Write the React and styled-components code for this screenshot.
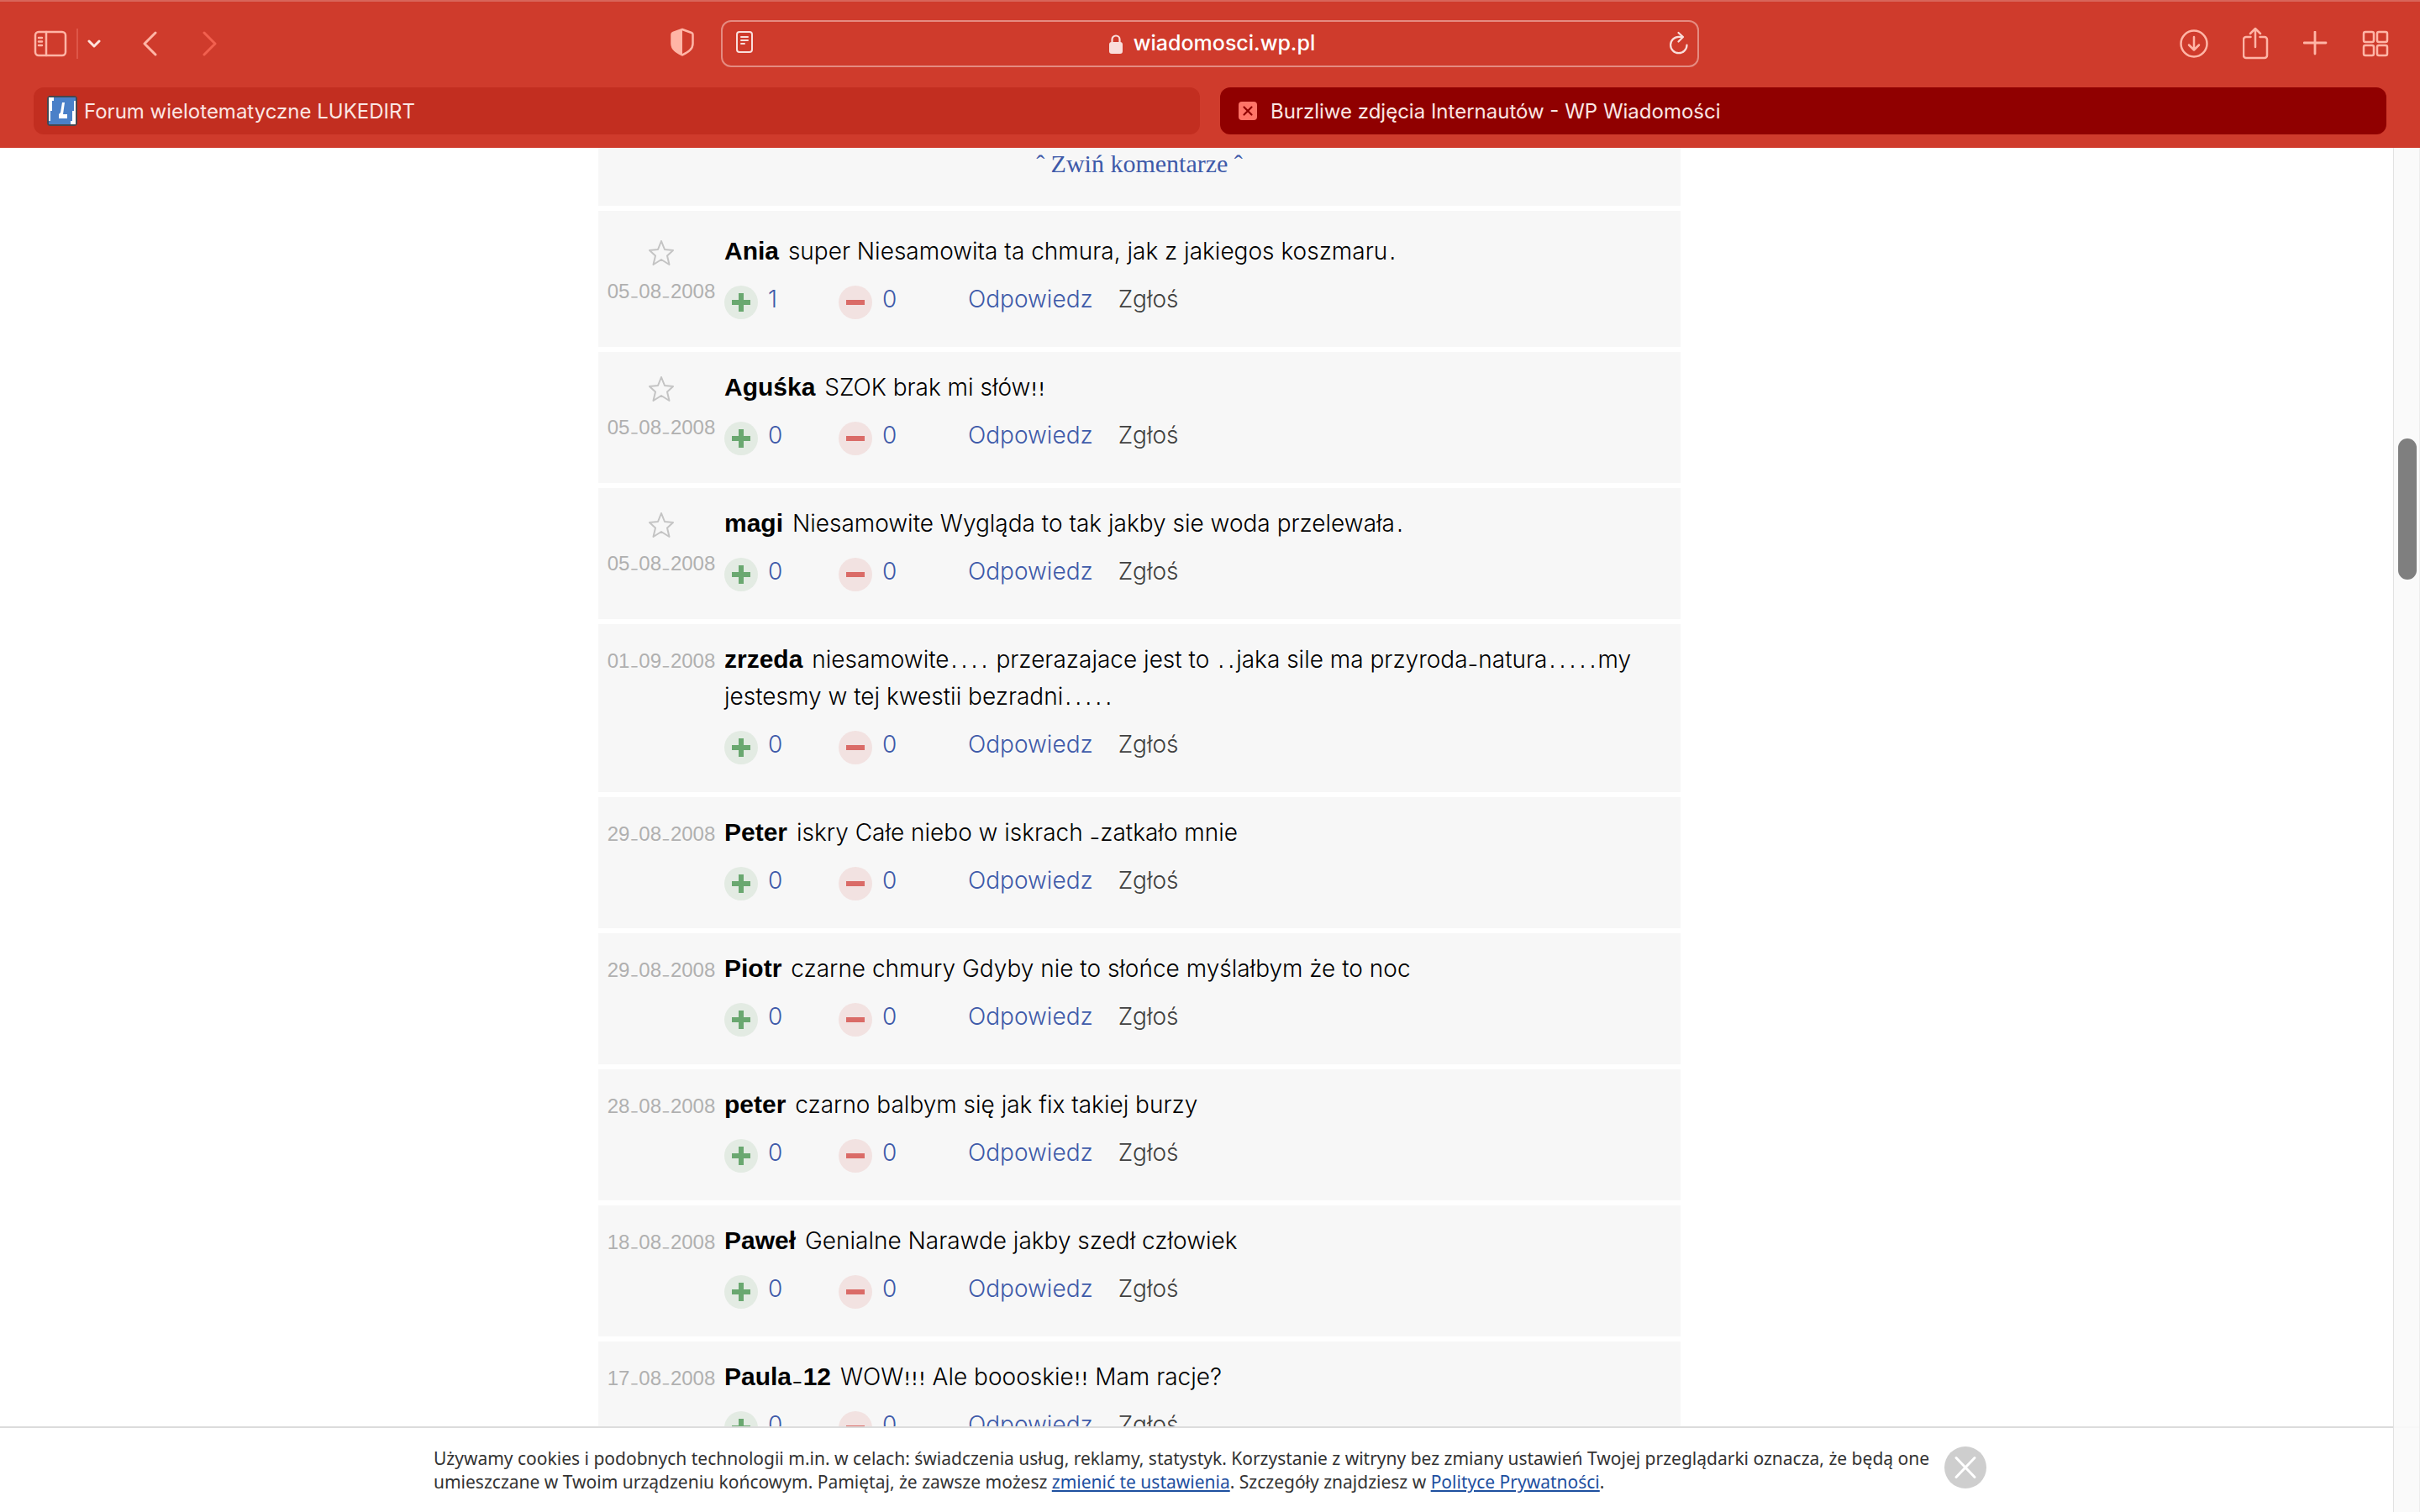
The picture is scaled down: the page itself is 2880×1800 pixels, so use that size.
import React, { useState } from 'react';
import styled, { createGlobalStyle } from 'styled-components';

const comments = [
  { date: '05-08-2008', starred: true, author: 'Ania', text: 'super Niesamowita ta chmura, jak z jakiegos koszmaru.', plus: 1, minus: 0 },
  { date: '05-08-2008', starred: true, author: 'Aguśka', text: 'SZOK brak mi słów!!', plus: 0, minus: 0 },
  { date: '05-08-2008', starred: true, author: 'magi', text: 'Niesamowite Wygląda to tak jakby sie woda przelewała.', plus: 0, minus: 0 },
  { date: '01-09-2008', author: 'zrzeda', text: 'niesamowite.... przerazajace jest to ..jaka sile ma przyroda-natura.....my jestesmy w tej kwestii bezradni.....', plus: 0, minus: 0 },
  { date: '29-08-2008', author: 'Peter', text: 'iskry Całe niebo w iskrach -zatkało mnie', plus: 0, minus: 0 },
  { date: '29-08-2008', author: 'Piotr', text: 'czarne chmury Gdyby nie to słońce myślałbym że to noc', plus: 0, minus: 0 },
  { date: '28-08-2008', author: 'peter', text: 'czarno balbym się jak fix takiej burzy', plus: 0, minus: 0 },
  { date: '18-08-2008', author: 'Paweł', text: 'Genialne Narawde jakby szedł człowiek', plus: 0, minus: 0 },
  { date: '17-08-2008', author: 'Paula-12', text: 'WOW!!! Ale boooskie!! Mam racje?', plus: 0, minus: 0 },
];

const Marked = ({ children }) =>
  children.split(/(\.+|!+|-+)/).map((part, i) => {
    if (/^\.+$/.test(part)) return <Dots key={i}>{part}</Dots>;
    if (/^!+$/.test(part)) return <Bangs key={i}>{part}</Bangs>;
    if (/^-+$/.test(part)) return <Dash key={i}>{part}</Dash>;
    return part;
  });

const Comment = ({ date, starred, author, text, plus, minus }) => (
  <CommentItem>
    <Meta>
      {starred && (
        <StarButton type="button" aria-label="Dodaj do ulubionych">
          <svg width="30" height="30" viewBox="0 0 30 30" fill="none" stroke="#c4c4c4" strokeWidth="2" strokeLinejoin="round">
            <path d="M15 1l4 10 10 1-7 6.500 2.500 10.500-9.500-6-9.500 6 2.500-10.500-7-6.500 10-1z" />
          </svg>
        </StarButton>
      )}
      <time><Marked>{date}</Marked></time>
    </Meta>

    <div>
      <Body>
        <strong><Marked>{author}</Marked></strong> <Marked>{text}</Marked>
      </Body>
      <Actions>
        <Vote type="button" aria-label={`Plus ${plus}`}>
          <svg width="40" height="40" viewBox="0 0 40 40">
            <circle cx="20" cy="20" r="20" fill="#e3ebe3" />
            <path d="M9 17h8V9h6v8h8v6h-8v8h-6v-8H9z" fill="#6aa870" />
          </svg>
          {plus}
        </Vote>
        <Vote type="button" aria-label={`Minus ${minus}`}>
          <svg width="40" height="40" viewBox="0 0 40 40">
            <circle cx="20" cy="20" r="20" fill="#f2e2e1" />
            <path d="M9 17h22v6H9z" fill="#da6b67" />
          </svg>
          {minus}
        </Vote>
        <ActionLink href="#odpowiedz">Odpowiedz</ActionLink>
        <ActionLink href="#zglos" $muted>Zgłoś</ActionLink>
      </Actions>
    </div>
  </CommentItem>
);

const Toolbar = () => {
  const [address, setAddress] = useState('wiadomosci.wp.pl');

  return (
    <ToolbarRow>
      <LeftTools>
        <IconButton type="button" aria-label="Pasek boczny">
          <svg width="40" height="32" viewBox="0 0 40 32" fill="none" stroke="currentColor" strokeWidth="2.500" strokeLinecap="round">
            <rect x="2" y="2" width="36" height="28" rx="4" />
            <path d="M15 2v28M6 9h4M6 13.500h4M6 18h4" />
          </svg>
        </IconButton>
        <ToolDivider />
        <IconButton type="button" aria-label="Grupy kart">
          <svg width="16" height="12" viewBox="0 0 16 12" fill="none" stroke="#ffe3dc" strokeWidth="3" strokeLinecap="round" strokeLinejoin="round">
            <path d="M2 3l6 6 6-6" />
          </svg>
        </IconButton>
        <NavButtons>
          <IconButton type="button" aria-label="Wstecz">
            <svg width="18" height="32" viewBox="0 0 18 32" fill="none" stroke="currentColor" strokeWidth="3" strokeLinecap="round" strokeLinejoin="round">
              <path d="M16 3L3 16l13 13" />
            </svg>
          </IconButton>
          <IconButton type="button" aria-label="Dalej" $dim>
            <svg width="18" height="32" viewBox="0 0 18 32" fill="none" stroke="currentColor" strokeWidth="3" strokeLinecap="round" strokeLinejoin="round">
              <path d="M2 3l13 13L2 29" />
            </svg>
          </IconButton>
        </NavButtons>
        <ShieldSlot>
          <IconButton type="button" aria-label="Raport prywatności">
            <svg width="28" height="34" viewBox="0 0 28 34">
              <path d="M14 2l11 4c1 .4 1.500 1 1.500 2v11c0 7-6 10-12.500 13.500C7.500 29 1.500 26 1.500 19V8c0-1 .5-1.600 1.500-2z" fill="none" stroke="currentColor" strokeWidth="2.500" strokeLinejoin="round" />
              <path d="M14 2v30.500C7.500 29 1.500 26 1.500 19V8c0-1 .5-1.600 1.500-2z" fill="currentColor" />
            </svg>
          </IconButton>
        </ShieldSlot>
      </LeftTools>

      <AddressField>
        <IconButton type="button" aria-label="Tryb czytania" $light>
          <svg width="22" height="30" viewBox="0 0 22 30" fill="none" stroke="currentColor" strokeWidth="2" strokeLinecap="round">
            <rect x="1" y="1" width="18" height="24" rx="3" />
            <path d="M6 7h8M6 11h8M6 15h4" />
          </svg>
        </IconButton>
        <AddressText>
          <svg width="18" height="25" viewBox="0 0 18 25" fill="none">
            <rect x="1" y="10" width="16" height="14" rx="3" fill="#f9dedb" />
            <path d="M4.500 11V7a4.500 4.500 0 0 1 9 0v4" stroke="#f9dedb" strokeWidth="2.200" />
          </svg>
          <input aria-label="Adres" value={address} onChange={(e) => setAddress(e.target.value)} />
        </AddressText>
        <IconButton type="button" aria-label="Odśwież" $light>
          <svg width="24" height="30" viewBox="0 0 24 30" fill="none" stroke="currentColor" strokeWidth="2.200" strokeLinecap="round" strokeLinejoin="round">
            <path d="M21.500 16.500a9.700 9.700 0 1 1-9.700-9.700h4.500M11.500 2l5.500 5-5.500 5.500" />
          </svg>
        </IconButton>
      </AddressField>

      <RightTools>
        <IconButton type="button" aria-label="Pobrane">
          <svg width="36" height="36" viewBox="0 0 36 36" fill="none" stroke="currentColor" strokeWidth="2.500" strokeLinecap="round" strokeLinejoin="round">
            <circle cx="18" cy="18" r="15.500" />
            <path d="M18 10v15M12 19.500l6 6 6-6" />
          </svg>
        </IconButton>
        <IconButton type="button" aria-label="Udostępnij">
          <svg width="32" height="44" viewBox="0 0 32 44" fill="none" stroke="currentColor" strokeWidth="2.500" strokeLinecap="round" strokeLinejoin="round">
            <path d="M9.500 14H4a3 3 0 0 0-3 3v19a3 3 0 0 0 3 3h22a3 3 0 0 0 3-3V17a3 3 0 0 0-3-3h-5.500M15 26V4M9 10l6-6 6 6" />
          </svg>
        </IconButton>
        <IconButton type="button" aria-label="Nowa karta">
          <svg width="30" height="30" viewBox="0 0 30 30" fill="none" stroke="currentColor" strokeWidth="2.800" strokeLinecap="round">
            <path d="M14 1v26M1 14h26" />
          </svg>
        </IconButton>
        <IconButton type="button" aria-label="Przegląd kart">
          <svg width="32" height="32" viewBox="0 0 32 32" fill="none" stroke="currentColor" strokeWidth="2.500">
            <rect x="2" y="2" width="12" height="12" rx="2" />
            <rect x="18" y="2" width="12" height="12" rx="2" />
            <rect x="2" y="18" width="12" height="12" rx="2" />
            <rect x="18" y="18" width="12" height="12" rx="2" />
          </svg>
        </IconButton>
      </RightTools>
    </ToolbarRow>
  );
};

const App = () => (
  <Window>
    <GlobalStyle />

    <Chrome>
      <Toolbar />
      <Tabs>
        <Tab type="button">
          <svg width="36" height="36" viewBox="0 0 36 36">
            <rect width="36" height="36" rx="4" fill="#46474f" />
            <rect x="2" y="2" width="32" height="32" fill="#4a80c8" />
            <path d="M2 2h6v4H6v12H4v12H2zM34 34h-6v-4h2V18h2V6h2z" fill="#fff" />
            <path d="M18 8h3l-2 14h5v5H14v-5l2-2z" fill="#fff" />
          </svg>
          Forum wielotematyczne LUKEDIRT
        </Tab>
        <Tab type="button" $active>
          <svg width="22" height="22" viewBox="0 0 22 22">
            <rect width="22" height="22" rx="4" fill="#ff7468" />
            <path d="M6.500 6.500l9 9M15.500 6.500l-9 9" stroke="#900000" strokeWidth="2.200" strokeLinecap="round" />
          </svg>
          Burzliwe zdjęcia Internautów - WP Wiadomości
        </Tab>
      </Tabs>
    </Chrome>

    <Page>
      <Thread>
        <Collapse>
          <a href="#komentarze">ˆ Zwiń komentarze ˆ</a>
        </Collapse>
        <CommentList>
          {comments.map((comment) => (
            <Comment key={comment.author} {...comment} />
          ))}
        </CommentList>
      </Thread>
    </Page>

    <CookieBar>
      <p>
        Używamy cookies i podobnych technologii m.in. w celach: świadczenia usług, reklamy, statystyk. Korzystanie z witryny bez zmiany ustawień Twojej przeglądarki oznacza, że będą one umieszczane w Twoim urządzeniu końcowym. Pamiętaj, że zawsze możesz <a href="#ustawienia">zmienić te ustawienia</a>. Szczegóły znajdziesz w <a href="#polityka">Polityce Prywatności</a>.
      </p>
      <CloseButton type="button" aria-label="Zamknij">
        <svg width="50" height="50" viewBox="0 0 50 50">
          <circle cx="25" cy="25" r="25" fill="#cecece" />
          <path d="M14 13.500l22 23M36 13.500l-22 23" stroke="#fff" strokeWidth="3" strokeLinecap="round" />
        </svg>
      </CloseButton>
    </CookieBar>

    <ScrollTrack>
      <ScrollThumb />
    </ScrollTrack>
  </Window>
);

export default App;

const GlobalStyle = createGlobalStyle`
  * {
    box-sizing: border-box;
  }

  body {
    background: #fff;
    margin: 0;
  }

  button {
    background: none;
    border: 0;
    color: inherit;
    font: inherit;
    padding: 0;
  }

  svg {
    display: block;
    flex: none;
  }

  a {
    text-decoration: none;
  }
`;

const Window = styled.div`
  display: flex;
  flex-direction: column;
  font-family: Inter, 'Liberation Sans', sans-serif;
  font-weight: 300;
  height: 100vh;
  overflow: hidden;
  position: relative;
`;

const Chrome = styled.header`
  background: #cf3b2c;
  border-top: 2px solid #d8655a;
  flex: none;
  font-weight: 400;
  padding: 22px 40px 16px;
`;

const ToolbarRow = styled.div`
  align-items: center;
  display: grid;
  grid-template-columns: 1fr minmax(0, 1164px) 1fr;
  height: 56px;
`;

const LeftTools = styled.div`
  align-items: center;
  display: flex;
  gap: 11px;
`;

const ToolDivider = styled.span`
  background: #de5648;
  height: 36px;
  width: 2px;
`;

const NavButtons = styled.div`
  display: flex;
  gap: 54px;
  margin-left: 38px;
`;

const ShieldSlot = styled.div`
  margin: 0 32px 0 auto;
`;

const IconButton = styled.button`
  color: ${({ $dim, $light }) => ($dim ? '#f2604f' : $light ? '#f9dedb' : '#ffb5a6')};
`;

const AddressField = styled.div`
  align-items: center;
  border: 2px solid #e58b81;
  border-radius: 12px;
  display: flex;
  height: 56px;
  justify-content: space-between;
  padding: 0 10px 0 16px;
`;

const AddressText = styled.div`
  align-items: center;
  display: flex;
  gap: 12px;

  input {
    background: none;
    border: 0;
    color: #fff;
    field-sizing: content;
    font: inherit;
    font-size: 25px;
    font-weight: 500;
    outline: 0;
    padding: 0 0 2px;
  }
`;

const RightTools = styled.div`
  align-items: center;
  display: flex;
  gap: 40px;
  justify-content: flex-end;
  margin-right: -3px;
`;

const Tabs = styled.nav`
  display: grid;
  gap: 24px;
  grid-template-columns: 1fr 1fr;
  margin-top: 24px;
`;

const Tab = styled.button`
  && {
    align-items: center;
    background: ${({ $active }) => ($active ? '#900000' : '#c22e20')};
    border-radius: 12px;
    color: #fbe6e3;
    display: flex;
    font-size: 24px;
    gap: ${({ $active }) => ($active ? '16px' : '8px')};
    height: 56px;
    padding: 0 ${({ $active }) => ($active ? '22px' : '16px')};
  }
`;

const Page = styled.main`
  flex: 1;
  min-height: 0;
  overflow: hidden;
  padding-right: 32px;
`;

const Thread = styled.section`
  margin-left: 25%;
  max-width: 1288px;
`;

const Collapse = styled.div`
  background: #f7f7f7;
  font-family: 'Liberation Serif', serif;
  font-size: 30px;
  height: 69px;
  line-height: 38px;
  text-align: center;

  a {
    color: #3e5aa9;
  }
`;

const CommentList = styled.ul`
  list-style: none;
  margin: 0;
  padding: 0;
`;

const CommentItem = styled.li`
  background: #f7f7f7;
  display: grid;
  grid-template-columns: 150px 1fr;
  margin-top: 6px;
  padding: 20px 16px 38px 0;

  &:first-child {
    padding-top: 26px;
  }
`;

const Meta = styled.div`
  align-items: center;
  color: #b0b0b0;
  display: flex;
  flex-direction: column;
  font-family: 'Liberation Sans', sans-serif;
  font-size: 24px;
  line-height: 48px;
`;

const StarButton = styled.button`
  && {
    height: 46px;
    padding-top: 2px;
  }
`;

const Body = styled.p`
  color: #000;
  font-size: 28px;
  line-height: 44px;
  margin: 0;

  strong {
    font-family: 'Liberation Sans', sans-serif;
    font-size: 30px;
    font-weight: 700;
    line-height: 30px;
    margin-right: 3px;
  }
`;

const Dots = styled.span`
  font-family: 'Liberation Mono', monospace;
  font-size: 20px;
  line-height: 20px;
`;

const Bangs = styled.span`
  font-family: 'DejaVu Sans', sans-serif;
  font-size: 22px;
  font-weight: 400;
  line-height: 20px;
`;

const Dash = styled.span`
  font-family: Inter, sans-serif;
  font-weight: 300;
  line-height: 20px;
  vertical-align: -6px;
`;

const Actions = styled.div`
  display: grid;
  font-size: 28px;
  grid-template-columns: 136px 154px max-content max-content;
  height: 40px;
  line-height: 42px;
  margin-top: 14px;
`;

const Vote = styled.button`
  && {
    color: #3e5aa9;
    display: flex;
    gap: 12px;
    height: 42px;
  }

  svg {
    margin-top: 5px;
  }
`;

const ActionLink = styled.a`
  color: ${({ $muted }) => ($muted ? '#404040' : '#3e5aa9')};
  margin-right: 30px;
`;

const CookieBar = styled.footer`
  align-items: center;
  background: #fff;
  border-top: 2px solid #dcdcdc;
  display: flex;
  flex: none;
  gap: 16px;
  height: 102px;
  justify-content: center;
  padding: 0 32px 6px;

  p {
    color: #333;
    flex: 0 1 1782px;
    font-family: 'Noto Sans', sans-serif;
    font-size: 21px;
    font-weight: 400;
    line-height: 28px;
    margin: 0;
    padding-top: 6px;
  }

  a {
    color: #1d4f9f;
    text-decoration: underline;
  }
`;

const CloseButton = styled.button`
  flex: none;
`;

const ScrollTrack = styled.div`
  background: rgba(250, 250, 250, 0.9);
  border-left: 1px solid #e2e2e2;
  border-right: 1px solid #ededed;
  bottom: 0;
  display: grid;
  grid-template-rows: 346fr 168fr 1110fr;
  padding: 0 3px 0 5px;
  position: absolute;
  right: 0;
  top: 176px;
  width: 32px;
`;

const ScrollThumb = styled.div`
  background: #7f7f7f;
  border-radius: 11px;
  grid-row: 2;
`;
